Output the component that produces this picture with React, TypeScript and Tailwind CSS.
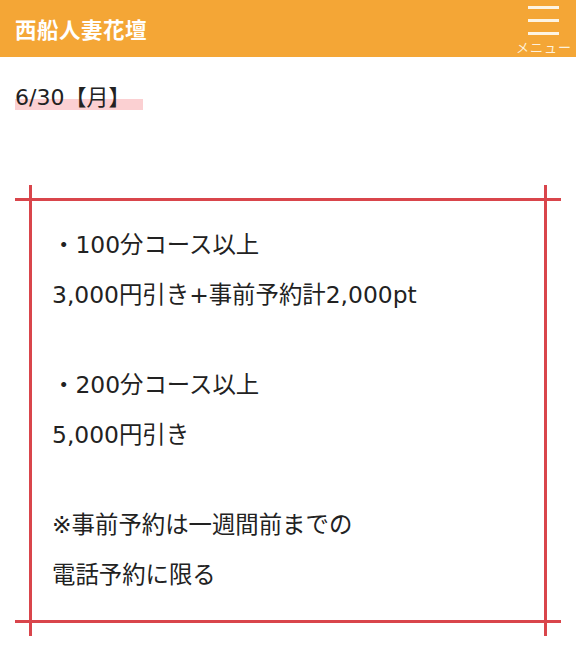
const font = { fontFamily: '"DejaVu Sans", "Noto Sans CJK JP", sans-serif' };
const cjk = { fontFamily: '"Noto Sans CJK JP", sans-serif' };

function Header() {
  return (
    <header className="flex h-[57px] items-center justify-between bg-[#f4a636] pl-[15px] pr-[4px]" style={cjk}>
      <h1 className="text-[21.5px] font-bold leading-none tracking-[0.5px] text-white">西船人妻花壇</h1>
      <button className="flex flex-col items-center pt-[2px]">
        <span className="flex w-[31px] flex-col gap-[10px]">
          <span className="h-[3px] bg-[#fdf4e3]" />
          <span className="h-[3px] bg-[#fdf4e3]" />
          <span className="h-[3px] bg-[#fdf4e3]" />
        </span>
        <span className="mt-[5px] text-[13px] leading-none tracking-[1px] text-[#fdf1dc]">メニュー</span>
      </button>
    </header>
  );
}

const groups = [
  ['・100分コース以上', '3,000円引き+事前予約計2,000pt'],
  ['・200分コース以上', '5,000円引き'],
  ['※事前予約は一週間前までの', '電話予約に限る'],
];

export default function App() {
  return (
    <div className="min-h-[668px] bg-white text-[#222]" style={font}>
      <Header />
      <div className="px-[15px] pt-[30px]">
        <p className="text-[22px] leading-[22px]">
          <span className="bg-[linear-gradient(transparent_55%,#fbd0d2_55%)] pr-[13px]">6/30【月】</span>
        </p>
      </div>

      <div className="relative mx-[15px] mt-[89px] border-y-[3px] border-[#d9454b] px-[37px] pb-[20px] pt-[20px]">
        <span className="absolute -top-[16px] -bottom-[16px] left-[14px] w-[3px] bg-[#d9454b]" />
        <span className="absolute -top-[16px] -bottom-[16px] right-[14px] w-[3px] bg-[#d9454b]" />
        {groups.map((g, i) => (
          <div key={i} className={i > 0 ? 'mt-[41px]' : ''}>
            {g.map((line) => (
              <p key={line} className="text-[23.4px] leading-[49.5px] text-[#222]">
                {line}
              </p>
            ))}
          </div>
        ))}
      </div>
    </div>
  );
}
